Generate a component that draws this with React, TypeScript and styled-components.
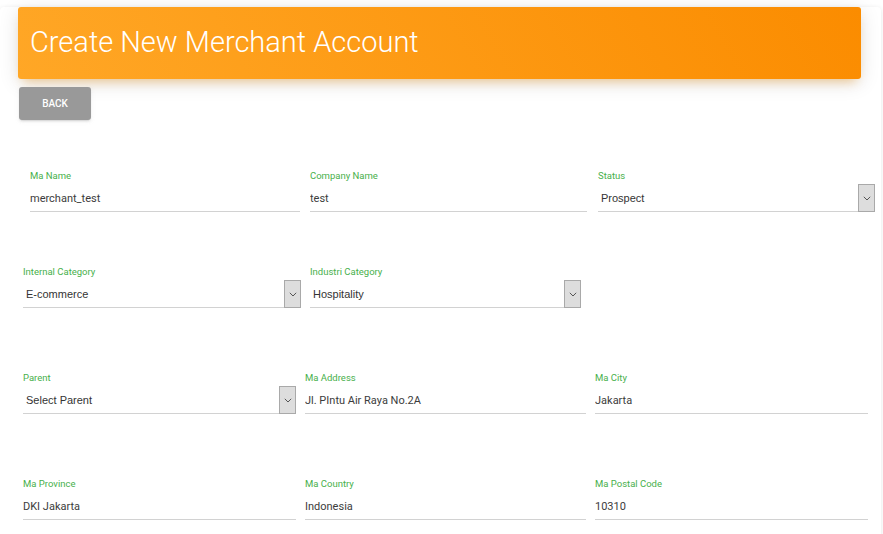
import React from "react";
import styled, { createGlobalStyle } from "styled-components";

const GlobalStyle = createGlobalStyle`
  html, body { margin: 0; padding: 0; background: #ffffff; }
  body { font-family: Roboto, "Liberation Sans", Arial, sans-serif; overflow: hidden; }
  * { box-sizing: border-box; }
`;

const Page = styled.div`
  width: 883px;
  height: 534px;
  padding-top: 15px;
  overflow: hidden;
`;

const Card = styled.div`
  width: 881px;
  min-height: 560px;
  background: #fff;
  border-radius: 4px;
  box-shadow: 0 1px 5px rgba(0, 0, 0, 0.1);
`;

const CardHeader = styled.div`
  margin: -8px 20px 0 18px;
  height: 72px;
  border-radius: 3px;
  background: linear-gradient(60deg, #ffa726, #fb8c00);
  box-shadow: 0 4px 20px 0 rgba(0, 0, 0, 0.12), 0 7px 10px -5px rgba(255, 152, 0, 0.4);
  display: flex;
  align-items: center;
  padding: 0 12px 2px;
`;

const Title = styled.h4`
  margin: 0;
  color: #fff;
  font-family: Roboto, "Liberation Sans", sans-serif;
  font-weight: 300;
  font-size: 29px;
  letter-spacing: 0;
`;

const CardBody = styled.div`
  padding: 8px 0 0 19px;
`;

const BackButton = styled.button`
  width: 72px;
  height: 33px;
  border: none;
  border-radius: 3px;
  background: #999999;
  color: #fff;
  font-family: Roboto, "Liberation Sans", sans-serif;
  font-weight: 500;
  font-size: 10px;
  text-transform: uppercase;
  padding: 0;
  box-shadow: 0 2px 2px 0 rgba(153, 153, 153, 0.14), 0 3px 1px -2px rgba(153, 153, 153, 0.2), 0 1px 5px 0 rgba(153, 153, 153, 0.12);
`;

const Row = styled.div<{ $left: number; $top: number }>`
  display: flex;
  margin-left: ${(p) => p.$left - 19}px;
  margin-top: ${(p) => p.$top}px;
`;

const Field = styled.div<{ $w: number; $gap: number }>`
  width: ${(p) => p.$w}px;
  margin-left: ${(p) => p.$gap}px;
  display: flex;
  flex-direction: column;
`;

const Label = styled.label`
  height: 12px;
  line-height: 12px;
  font-family: Roboto, "Liberation Sans", sans-serif;
  font-size: 9.5px;
  color: #47b04b;
  margin-bottom: 2px;
  white-space: nowrap;
`;

const InputBox = styled.div`
  height: 28px;
  display: flex;
  align-items: stretch;
`;

const TextValue = styled.input`
  flex: 1;
  min-width: 0;
  border: none;
  border-bottom: 1px solid #d2d2d2;
  background: transparent;
  outline: none;
  padding: 1px 0 0;
  margin: 0;
  font-family: Roboto, "Liberation Sans", sans-serif;
  font-size: 11px;
  color: #3c3c3c;
`;

const SelectValue = styled.div`
  flex: 1;
  min-width: 0;
  border-bottom: 1px solid #d2d2d2;
  display: flex;
  align-items: center;
  padding: 1px 0 0 3px;
  font-family: "Liberation Sans", Arial, sans-serif;
  font-size: 11px;
  color: #333;
`;

const ArrowBox = styled.div`
  width: 17px;
  height: 28px;
  background: #dddddd;
  border: 1px solid #a9a9a9;
  display: flex;
  align-items: center;
  justify-content: center;
`;

type F = { label: string; value: string; w: number; gap: number; select?: boolean };

const Chevron = () => (
  <svg width="8" height="5" viewBox="0 0 8 5">
    <path d="M0.8 0.8 L4 4 L7.2 0.8" fill="none" stroke="#555" strokeWidth="1" />
  </svg>
);

const FormField = ({ f }: { f: F }) => (
  <Field $w={f.w} $gap={f.gap}>
    <Label>{f.label}</Label>
    <InputBox>
      {f.select ? (
        <>
          <SelectValue>{f.value}</SelectValue>
          <ArrowBox>
            <Chevron />
          </ArrowBox>
        </>
      ) : (
        <TextValue readOnly value={f.value} />
      )}
    </InputBox>
  </Field>
);

const rows: { left: number; top: number; fields: F[] }[] = [
  {
    left: 30,
    top: 50,
    fields: [
      { label: "Ma Name", value: "merchant_test", w: 270, gap: 0 },
      { label: "Company Name", value: "test", w: 277, gap: 10 },
      { label: "Status", value: "Prospect", w: 277, gap: 11, select: true },
    ],
  },
  {
    left: 23,
    top: 54,
    fields: [
      { label: "Internal Category", value: "E-commerce", w: 278, gap: 0, select: true },
      { label: "Industri Category", value: "Hospitality", w: 271, gap: 9, select: true },
    ],
  },
  {
    left: 23,
    top: 64,
    fields: [
      { label: "Parent", value: "Select Parent", w: 273, gap: 0, select: true },
      { label: "Ma Address", value: "Jl. PIntu Air Raya No.2A", w: 281, gap: 9 },
      { label: "Ma City", value: "Jakarta", w: 273, gap: 9 },
    ],
  },
  {
    left: 23,
    top: 64,
    fields: [
      { label: "Ma Province", value: "DKI Jakarta", w: 273, gap: 0 },
      { label: "Ma Country", value: "Indonesia", w: 281, gap: 9 },
      { label: "Ma Postal Code", value: "10310", w: 273, gap: 9 },
    ],
  },
];

export default function App() {
  return (
    <>
      <GlobalStyle />
      <Page>
        <Card>
          <CardHeader>
            <Title>Create New Merchant Account</Title>
          </CardHeader>
          <CardBody>
            <BackButton>Back</BackButton>
            {rows.map((r, i) => (
              <Row key={i} $left={r.left} $top={r.top}>
                {r.fields.map((f) => (
                  <FormField key={f.label} f={f} />
                ))}
              </Row>
            ))}
          </CardBody>
        </Card>
      </Page>
    </>
  );
}
